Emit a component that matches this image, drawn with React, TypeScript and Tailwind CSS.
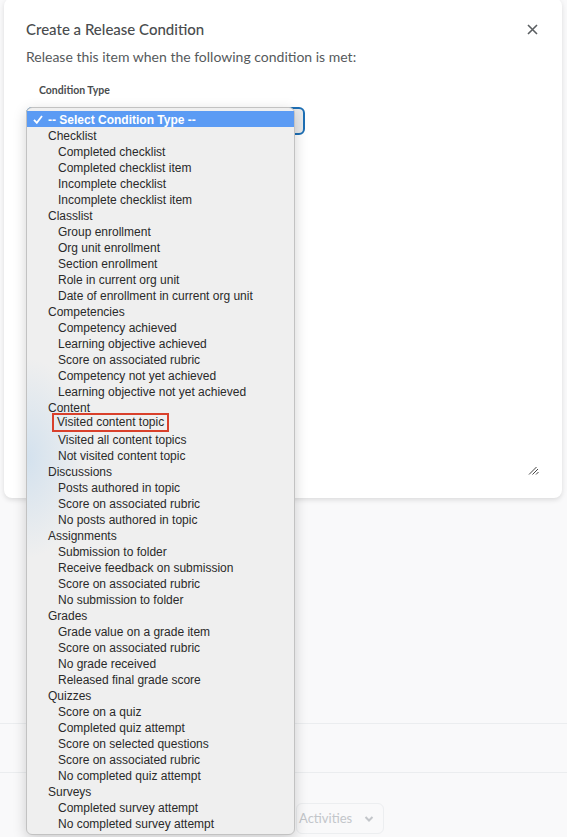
const groups: { label: string; items: string[] }[] = [
  {
    label: "Checklist",
    items: ["Completed checklist", "Completed checklist item", "Incomplete checklist", "Incomplete checklist item"],
  },
  {
    label: "Classlist",
    items: [
      "Group enrollment",
      "Org unit enrollment",
      "Section enrollment",
      "Role in current org unit",
      "Date of enrollment in current org unit",
    ],
  },
  {
    label: "Competencies",
    items: [
      "Competency achieved",
      "Learning objective achieved",
      "Score on associated rubric",
      "Competency not yet achieved",
      "Learning objective not yet achieved",
    ],
  },
  {
    label: "Content",
    items: ["Visited content topic", "Visited all content topics", "Not visited content topic"],
  },
  {
    label: "Discussions",
    items: ["Posts authored in topic", "Score on associated rubric", "No posts authored in topic"],
  },
  {
    label: "Assignments",
    items: [
      "Submission to folder",
      "Receive feedback on submission",
      "Score on associated rubric",
      "No submission to folder",
    ],
  },
  {
    label: "Grades",
    items: ["Grade value on a grade item", "Score on associated rubric", "No grade received", "Released final grade score"],
  },
  {
    label: "Quizzes",
    items: [
      "Score on a quiz",
      "Completed quiz attempt",
      "Score on selected questions",
      "Score on associated rubric",
      "No completed quiz attempt",
    ],
  },
  {
    label: "Surveys",
    items: ["Completed survey attempt", "No completed survey attempt"],
  },
]

function ConditionMenu() {
  return (
    <div className="absolute left-[26px] top-[107px] w-[269px] rounded-[6px] border border-[#c2c2c2] bg-[#efefef] bg-[radial-gradient(ellipse_60px_100px_at_0px_350px,rgba(160,200,235,0.35),transparent)] py-[3px] text-[12px] leading-[16px] text-[#2a2a2a] shadow-[0_4px_14px_rgba(0,0,0,0.18)] [font-family:'Liberation_Sans',Arial,sans-serif]">
      {/* selected option */}
      <div className="flex h-[16px] items-center bg-[#5b9bf4] pt-[1px] text-white">
        <svg className="ml-[6px] mr-[5px]" width="10" height="9" viewBox="0 0 10 9" fill="none">
          <path d="M1 4.8l2.8 3L9 1" stroke="white" strokeWidth="1.8" />
        </svg>
        <span className="font-bold">-- Select Condition Type --</span>
      </div>
      {groups.map((g) => (
        <div key={g.label}>
          <div className="h-[16px] pt-[1px] pl-[21px]">{g.label}</div>
          {g.items.map((item) => (
            <div key={item} className="h-[16px] pt-[1px] pl-[31px]">
              {item === "Visited content topic" ? (
                <span className="-ml-[6px] inline-block h-[19px] -translate-y-[3px] border-2 border-[#d9402b] px-[3px] leading-[15px]">
                  {item}
                </span>
              ) : (
                item
              )}
            </div>
          ))}
        </div>
      ))}
    </div>
  )
}

export default function App() {
  return (
    <div className="relative h-[837px] w-[567px] overflow-hidden bg-[#f9f9fa] [font-family:Lato,'Open_Sans',sans-serif]">
      {/* page behind the dialog */}
      <div className="flex h-full flex-col pt-[723px]">
        <div className="h-[49px] border-t border-[#ebedef]" />
        <div className="border-t border-[#ebedef] pt-[30px] pl-[296px]">
          <div className="flex h-[31px] w-[88px] items-center gap-[12px] rounded-[6px] border border-[#eceef0] pl-[2px] text-[13px] text-[#c3c6ca]">
            Activities
            <svg width="10" height="8" viewBox="0 0 10 8" fill="none">
              <path d="M1.5 2l3.5 3.5L8.5 2" stroke="#c3c6ca" strokeWidth="2" />
            </svg>
          </div>
        </div>
      </div>

      {/* dialog */}
      <div className="absolute left-[4px] top-[-2px] flex h-[500px] w-[558px] flex-col rounded-[8px] bg-white px-[22px] pt-[21px] pb-[23px] shadow-[0_2px_5px_rgba(0,0,0,0.12)]">
        <div className="flex h-[20px] items-center justify-between">
          <h1 className="text-[15px] font-medium text-[#494c4e]">Create a Release Condition</h1>
          <svg className="mr-[2px]" width="11" height="11" viewBox="0 0 11 11">
            <path d="M1 1l9 9M10 1l-9 9" stroke="#5b5f62" strokeWidth="1.6" />
          </svg>
        </div>
        <p className="mt-[7px] text-[14px] leading-[22px] text-[#565a5c]">
          Release this item when the following condition is met:
        </p>
        <label className="mt-[14px] pl-[13px] text-[10.5px] font-bold leading-[16px] text-[#494c4e]">Condition Type</label>
        <div className="mt-[9px] h-[28px] w-[279px] rounded-[6px] border-2 border-[#1d6fb5] bg-[#e9eaeb]" />
        <div className="mt-[43px] h-[8px] w-[1px] bg-[#9a9da0]" />
        <div className="flex flex-1 items-end justify-between">
          <div className="mb-[2px] h-[25px] w-[70px] rounded-[4px] bg-[#1c4f80]" />
          <svg className="mr-[1px]" width="11" height="9" viewBox="0 0 11 9">
            <path d="M1 8.5L8.5 1M4.5 8.5L10 3M8 8.5L10.5 6" stroke="#444" strokeWidth="1" />
          </svg>
        </div>
      </div>

      <ConditionMenu />
    </div>
  )
}
